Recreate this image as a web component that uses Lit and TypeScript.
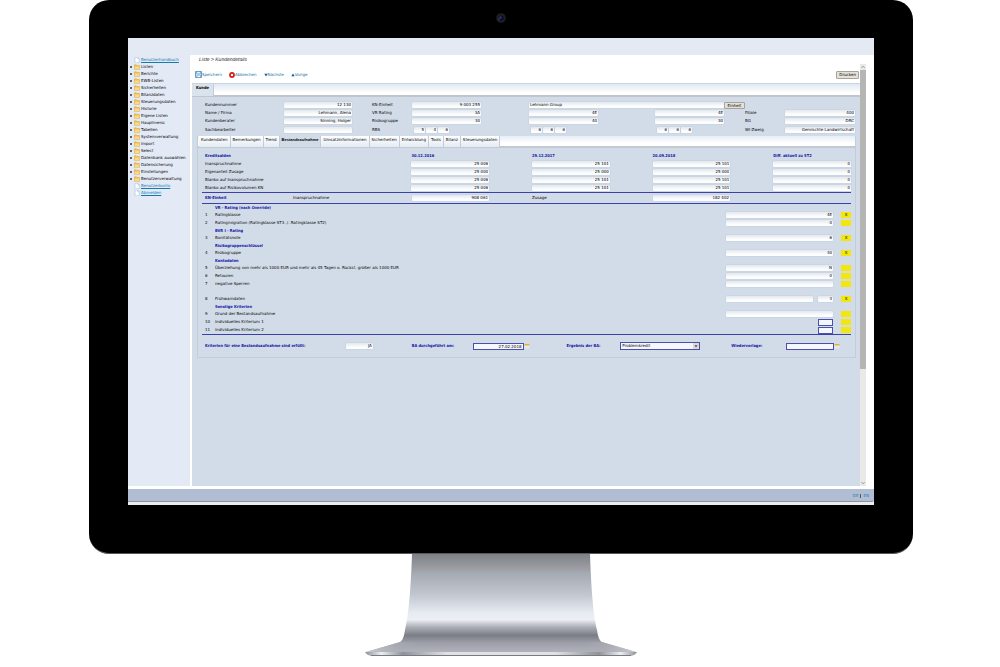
import { LitElement, html, css, svg, nothing } from "lit";
import { customElement, property, state } from "lit/decorators.js";

type Criterion =
  | { kind: "group"; label: string }
  | { kind: "space" }
  | { kind: "row"; no: number; label: string; value?: string; mark?: string; layout?: "split" | "small" };

const MENU = [
  "Listen", "Berichte", "EWB-Listen", "Sicherheiten", "Bilanzdaten", "Steuerungsdaten", "Historie",
  "Eigene Listen", "Hauptmenü", "Tabellen", "Systemverwaltung", "Import", "Select",
  "Datenbank auswählen", "Datensicherung", "Einstellungen", "Benutzerverwaltung",
];

const TABS = [
  "Kundendaten", "Bemerkungen", "Trend", "Bestandsaufnahme", "Umsatzinformationen", "Sicherheiten",
  "Entwicklung", "Tools", "Bilanz", "Steuerungsdaten",
];

const BALANCES: [string, string[]][] = [
  ["Inanspruchnahme", ["25 006", "25 101", "25 101", "0"]],
  ["Eigenanteil Zusage", ["25 000", "25 000", "25 000", "0"]],
  ["Blanko auf Inanspruchnahme", ["25 006", "25 101", "25 101", "0"]],
  ["Blanko auf Risikovolumen KN", ["25 006", "25 101", "25 101", "0"]],
];

const CRITERIA: Criterion[] = [
  { kind: "group", label: "VR - Rating (nach Override)" },
  { kind: "row", no: 1, label: "Ratingklasse", value: "4E", mark: "X" },
  { kind: "row", no: 2, label: "Ratingmigration (Ratingklasse ST3 ./. Ratingklasse ST2)", value: "0" },
  { kind: "group", label: "BVR I - Rating" },
  { kind: "row", no: 3, label: "Bonitätsnote", value: "6", mark: "X" },
  { kind: "group", label: "Risikogruppenschlüssel" },
  { kind: "row", no: 4, label: "Risikogruppe", value: "30", mark: "X" },
  { kind: "group", label: "Kontodaten" },
  { kind: "row", no: 5, label: "Überziehung von mehr als 1000 EUR und mehr als 45 Tagen o. Rückst. größer als 1000 EUR", value: "N" },
  { kind: "row", no: 6, label: "Retouren", value: "0" },
  { kind: "row", no: 7, label: "negative Sperren" },
  { kind: "space" },
  { kind: "row", no: 8, label: "Frühwarndaten", value: "3", mark: "X", layout: "split" },
  { kind: "group", label: "Sonstige Kriterien" },
  { kind: "row", no: 9, label: "Grund der Bestandsaufnahme" },
  { kind: "row", no: 10, label: "individuelles Kriterium 1", layout: "small" },
  { kind: "row", no: 11, label: "individuelles Kriterium 2", layout: "small" },
];

const shared = css`
  * { box-sizing: border-box; }
  a { color: inherit; text-decoration: none; }
  button, input, select { font: inherit; color: inherit; margin: 0; }
  svg { display: block; flex: none; }
  .field {
    display: block; width: 100%; min-width: 0; height: 6px; padding: 0 1px; border: 0; border-radius: 1px;
    background: linear-gradient(#e3e8ee, #fcfdfe 70%); box-shadow: 0 0 1px #9aa2ad;
    line-height: 6px; text-align: right; outline: 0;
  }
  .field.left { text-align: left; }
  .field.edit { height: 7px; border: 1px solid #4a4fb0; border-radius: 0; box-shadow: none; background: #f4f7fb; line-height: 5px; }
  .bold { font: 700 4px/8px "DejaVu Sans Condensed", "Noto Sans", sans-serif; color: #1216a4; }
`;

@customElement("side-menu")
class SideMenu extends LitElement {
  static styles = [shared, css`
    :host { display: block; background: #e3eaf6; }
    .list { list-style: none; margin: 0; padding: 1px 0 0 2px; }
    .item { display: flex; align-items: center; height: 7px; gap: 1px; white-space: nowrap; }
    .dot { width: 3px; height: 2px; flex: none; display: flex; }
    .dot.on::before { content: ""; width: 2px; height: 2px; border-radius: 1px; background: #333; }
    .link { color: #1479ad; text-decoration: underline; }
  `];
  private page() {
    return svg`<svg width="6" height="6" viewBox="0 0 12 12"><path d="M2 .5h5.5l3 3v8H2z" fill="#fdfeff" stroke="#9fb6cc"/><path d="M7.500 .5v3h3" fill="none" stroke="#9fb6cc"/></svg>`;
  }
  private folder() {
    return svg`<svg width="6" height="6" viewBox="0 0 12 12"><path d="M.6 10.500V2.500Q.6 1.500 1.600 1.500H4.500L5.800 3H10.400Q11.400 3 11.400 4V10.500z" fill="#f0bd4a" stroke="#d29a2d" stroke-width=".8"/><path d="M1.500 5h9.300v5H1.500z" fill="#f8d987"/></svg>`;
  }
  private doc(label: string) {
    return html`<li class="item"><span class="dot"></span>${this.page()}<a class="link" href="#">${label}</a></li>`;
  }
  render() {
    return html`<nav><ul class="list">
      ${this.doc("Benutzerhandbuch")}
      ${MENU.map((m) => html`<li class="item"><span class="dot on"></span>${this.folder()}<a href="#">${m}</a></li>`)}
      ${this.doc("Benutzerkonto")}${this.doc("Abmelden")}
    </ul></nav>`;
  }
}

@customElement("customer-head")
class CustomerHead extends LitElement {
  static styles = [shared, css`
    :host {
      display: grid; padding: 4px 5px 1px 13px; align-items: center; white-space: nowrap;
      grid-template-columns: 79fr 68fr 20fr 40fr 69fr 48fr 69fr 57fr 69fr 21fr 40fr 70fr;
      grid-template-rows: 8px 8px 8px 10px;
    }
    .c1 { grid-column: 1; } .c2 { grid-column: 2; } .c4 { grid-column: 4; } .c5 { grid-column: 5; }
    .c7 { grid-column: 7; } .c9 { grid-column: 9; } .c11 { grid-column: 11; } .c12 { grid-column: 12; }
    .wide { grid-column: 7 / 10; }
    .trio { display: grid; grid-template-columns: repeat(3, 11px); gap: 1px; padding-left: 2px; }
    .unit {
      grid-column: 10; height: 7px; padding: 0; line-height: 5px; border: 1px solid #a5a39b; border-radius: 1px;
      background: #e4e1d8; font-weight: 400; justify-self: stretch;
    }
  `];
  private box(col: string, value: string, name: string) {
    return html`<input class="field ${col}" readonly aria-label=${name} .value=${value} />`;
  }
  private trio(col: string, values: string[]) {
    return html`<div class="trio ${col}">${values.map((v) => this.box("", v, "RBS"))}</div>`;
  }
  render() {
    return html`
      <span class="c1">Kundennummer</span>${this.box("c2", "12 130", "Kundennummer")}
      <span class="c4">KN-Einheit</span>${this.box("c5", "9 003 255", "KN-Einheit")}
      ${this.box("wide left", "Lehmann Group", "Gruppe")}<button class="unit">Einheit</button>
      <span class="c1">Name / Firma</span>${this.box("c2", "Lehmann, Alena", "Name / Firma")}
      <span class="c4">VR Rating</span>${this.box("c5", "3A", "VR Rating")}
      ${this.box("c7", "4E", "VR Rating")}${this.box("c9", "4E", "VR Rating")}
      <span class="c11">Filiale</span>${this.box("c12", "400", "Filiale")}
      <span class="c1">Kundenberater</span>${this.box("c2", "Sinning, Holger", "Kundenberater")}
      <span class="c4">Risikogruppe</span>${this.box("c5", "30", "Risikogruppe")}
      ${this.box("c7", "40", "Risikogruppe")}${this.box("c9", "30", "Risikogruppe")}
      <span class="c11">BG</span>${this.box("c12", "DRC", "BG")}
      <span class="c1">Sachbearbeiter</span>${this.box("c2", "", "Sachbearbeiter")}
      <span class="c4">RBS</span>${this.trio("c5", ["5", "4", "6"])}
      ${this.trio("c7", ["6", "6", "6"])}${this.trio("c9", ["6", "6", "6"])}
      <span class="c11">WI-Zweig</span>${this.box("c12", "Gemischte Landwirtschaft", "WI-Zweig")}
    `;
  }
}

@customElement("review-panel")
class ReviewPanel extends LitElement {
  @state() active = "Bestandsaufnahme";
  static styles = [shared, css`
    :host { display: block; margin: 0 4px 0 5px; border: 1px solid #c3cdd9; border-top: 0; white-space: nowrap; }
    .tabs { display: flex; height: 12px; padding-left: 1px; background: linear-gradient(#e6eef6, #ffffff 70%); border-bottom: 2px solid #c3c9d1; }
    .tab {
      padding: 0 2px; height: 11px; border: 0; border-right: 1px solid #c3cdd9; line-height: 8px; display: flex;
      background: linear-gradient(#ffffff, #e3ebf4);
    }
    .tab.on { font: 700 4px/8px "Liberation Sans", Arial, sans-serif; background: #d2dce8; }
    .body { padding: 4px 4px 0; }
    .grid { width: 100%; border-collapse: collapse; table-layout: fixed; }
    .grid th, .grid td { padding: 0; height: 8px; text-align: left; vertical-align: middle; }
    .grid .name { font-weight: 400; }
    .grid .first { padding-left: 3px; }
    .k0 { width: 32.300%; } .k1 { width: 12%; } .gap { width: 6.600%; }
    .unit {
      display: grid; grid-template-columns: 91fr 119fr 77fr 43fr 78fr 43fr 77fr 121fr; height: 12px; align-items: center;
      border: solid #3b40ac; border-width: 1px 0; padding-left: 0;
    }
    .unit .c7 { grid-column: 7; }
    .unit .bold { padding-left: 3px; }
    .list { border-bottom: 1px solid #3b40ac; }
    .crit { display: grid; grid-template-columns: 13px 1fr 16.500% 8px 10px; height: 8px; align-items: center; }
    .crit.head, .crit.space { height: 7px; }
    .crit .no { padding-left: 3px; }
    .bold.group { grid-column: 2; line-height: 7px; }
    .cell { display: grid; grid-template-columns: 1fr 15px; gap: 5px; }
    .cell .all { grid-column: 1 / 3; }
    .cell .end { grid-column: 2; }
    .mark { grid-column: 5; height: 6px; line-height: 6px; text-align: center; background: #f3e60c; }
    .foot {
      display: grid; height: 22px; align-items: center; padding-left: 3px;
      grid-template-columns: 141fr 27fr 39fr 61fr 51fr 43fr 54fr 80fr 31fr 55fr 48fr 17fr;
    }
    .f4 { grid-column: 4; } .f7 { grid-column: 7; } .f10 { grid-column: 10; }
    .pick { position: relative; }
    .drop {
      appearance: none; display: block; width: 100%; height: 8px; padding: 0 1px; border: 1px solid #4a4fb0; border-radius: 0;
      background: #f4f7fb; line-height: 6px;
    }
    .arrow { position: absolute; right: 1px; top: 1px; pointer-events: none; }
  `];
  private field(value = "", cls = "", name = "Wert") {
    return html`<input class="field ${cls}" aria-label=${name} .value=${value} />`;
  }
  private calendar() {
    return svg`<svg width="6" height="6" viewBox="0 0 12 12"><path d="M1 3h10v8H1z" fill="#e3e7ee"/><path d="M1 2h10v3H1z" fill="#efb020"/></svg>`;
  }
  private criterion(c: Criterion) {
    if (c.kind === "space") return html`<div class="crit space"></div>`;
    if (c.kind === "group") return html`<div class="crit head"><span class="bold group">${c.label}</span></div>`;
    const cell =
      c.layout === "split" ? html`${this.field("", "", c.label)}${this.field(c.value, "", c.label)}`
      : c.layout === "small" ? this.field("", "edit end", c.label)
      : this.field(c.value, "all", c.label);
    return html`<div class="crit"><span class="no">${c.no}</span><span>${c.label}</span><div class="cell">${cell}</div><span class="mark">${c.mark ?? nothing}</span></div>`;
  }
  render() {
    return html`
      <div class="tabs" role="tablist">
        ${TABS.map((t) => html`<button role="tab" class="tab ${t === this.active ? "on" : ""}" @click=${() => (this.active = t)}>${t}</button>`)}
      </div>
      <div class="body">
        <table class="grid">
          <colgroup><col class="k0" /><col class="k1" /><col class="gap" /><col class="k1" /><col class="gap" /><col class="k1" /><col class="gap" /><col class="k1" /></colgroup>
          <tr><th class="first bold">Kreditsalden</th><th class="bold">30.12.2016</th><th></th><th class="bold">29.12.2017</th><th></th><th class="bold">20.09.2018</th><th></th><th class="bold">Diff. aktuell zu ST2</th></tr>
          ${BALANCES.map(([label, v]) => html`<tr><th class="first name">${label}</th>
            ${v.map((x, i) => html`${i ? html`<td></td>` : nothing}<td>${this.field(x, "", label)}</td>`)}</tr>`)}
        </table>
        <div class="unit"><span class="bold">KN-Einheit</span><span>Inanspruchnahme</span>${this.field("908 061", "", "Inanspruchnahme")}<span></span><span>Zusage</span>${this.field("182 402", "c7", "Zusage")}</div>
        <div class="list">${CRITERIA.map((c) => this.criterion(c))}</div>
        <div class="foot">
          <label class="bold" for="met">Kriterien für eine Bestandsaufnahme sind erfüllt:</label><input id="met" class="field" .value=${"JA"} />
          <label class="bold f4" for="date">BA durchgeführt am:</label><input id="date" class="field edit" .value=${"27.02.2018"} />${this.calendar()}
          <label class="bold f7" for="result">Ergebnis der BA:</label>
          <div class="pick"><select id="result" class="drop"><option>Problemkredit</option></select>
            <svg class="arrow" width="6" height="6" viewBox="0 0 12 12"><path d="M0 0h12v12H0z" fill="#dcd9d0"/><path d="M3 5h6L6 8z" fill="#111"/></svg></div>
          <label class="bold f10" for="again">Wiedervorlage:</label><input id="again" class="field edit" />${this.calendar()}
        </div>
      </div>`;
  }
}

@customElement("app-root")
class AppRoot extends LitElement {
  static styles = [shared, css`
    :host { display: block; min-height: 100vh; background: #fff; font: 4px/8px "DejaVu Sans", "Liberation Sans", sans-serif; color: #000; text-rendering: geometricPrecision; }
    .monitor { margin: 0 87px 0 89px; padding: 0 39px 48px; background: #000; border-radius: 20px; border-bottom: 1px solid #55585c; }
    .camera { height: 38px; display: flex; justify-content: center; align-items: center; }
    .screen { background: #fff; }
    .band { height: 17px; background: #e3eaf4; }
    .work { display: grid; grid-template-columns: 62px 1fr 7px 7px; min-height: 431px; }
    .page { padding-left: 2px; display: flex; flex-direction: column; }
    .crumb { padding: 0 7px; font: italic 5px/11px "Liberation Sans", Arial, sans-serif; color: #1b2028; }
    .tools { display: flex; align-items: center; height: 17px; padding: 0 1px 0 3px; gap: 7px; }
    .tool { display: flex; align-items: center; color: #14709f; }
    .print { margin-left: auto; height: 8px; padding: 0 2px; line-height: 6px; border: 1px solid #a5a39b; border-radius: 1px; background: #e4e1d8; }
    .bar { height: 14px; border-bottom: 2px solid #c1c6cd; border-top: 1px solid #ccd5df; background: linear-gradient(#dfe9f3, #ffffff 80%); }
    .tab { width: 22px; height: 12px; padding: 0; border: 0; border-right: 1px solid #c3cdd9; background: #dae3ed; font: 700 4px/8px "DejaVu Sans Condensed", "Noto Sans", sans-serif; display: flex; justify-content: center; }
    .sheet { flex: 1; background: #d2dce8; padding-bottom: 16px; }
    .scroll { margin: 9px 0 0; width: 6px; background: #e9e9e7; display: flex; flex-direction: column; align-items: center; color: #555; }
    .thumb { height: 299px; width: 6px; background: #b5b5b3; }
    .end { margin-top: auto; }
    .status { margin-top: 3px; height: 13px; display: flex; justify-content: flex-end; align-items: center; gap: 2px; padding: 1px 5px 0; background: #b0bdd2; border-bottom: 1px solid #8f959e; color: #1b7fae; border-radius: 0 0 2px 0; }
    .sep { width: 1px; height: 4px; background: #555; }
    .rim { height: 3px; background: #eceeed; }
    .base { margin: 0 87px 0 89px; display: flex; justify-content: center; }
  `];
  render() {
    return html`
      <div class="monitor">
        <div class="camera"><svg width="12" height="12" viewBox="0 0 12 12"><circle cx="6" cy="5" r="4.800" fill="#1d1f24"/><circle cx="6" cy="5" r="2.500" fill="#0b0c18"/><circle cx="5.500" cy="4.500" r="1.200" fill="#30309a"/><circle cx="4" cy="6" r=".6" fill="#8a8d95"/></svg></div>
        <div class="screen">
          <div class="band"></div>
          <div class="work">
            <side-menu></side-menu>
            <main class="page">
              <div class="crumb">Liste &gt; Kundendetails</div>
              <div class="tools">
                <a class="tool" href="#"><svg width="7" height="7" viewBox="0 0 14 14"><path d="M1 1h12v12H1z" fill="#d7e8f5" stroke="#3a7db3" stroke-width="1.500"/><path d="M3 1.500h8v4H3z" fill="#fff" stroke="#3a7db3"/><path d="M4 8.500h7V13H4z" fill="#fff" stroke="#3a7db3"/></svg>Speichern</a>
                <a class="tool" href="#"><svg width="6" height="6" viewBox="0 0 12 12"><circle cx="6" cy="6" r="5.800" fill="#d3261c"/><path d="M4 4l4 4M8 4l-4 4" stroke="#fff" stroke-width="2"/></svg>Abbrechen</a>
                <a class="tool" href="#"><svg width="4" height="4" viewBox="0 0 8 8"><path d="M.5 1.500h7L4 7z" fill="#14609a"/></svg>Nächste</a>
                <a class="tool" href="#"><svg width="4" height="4" viewBox="0 0 8 8"><path d="M.5 6.500h7L4 1z" fill="#14609a"/></svg>Vorige</a>
                <button class="print">Drucken</button>
              </div>
              <div class="bar"><button class="tab">Kunde</button></div>
              <div class="sheet"><customer-head></customer-head><review-panel></review-panel></div>
            </main>
            <div class="scroll">
              <svg width="6" height="6" viewBox="0 0 12 12"><path d="M3 7.500l3-3 3 3" fill="none" stroke="#777" stroke-width="1.500"/></svg>
              <div class="thumb"></div>
              <svg class="end" width="6" height="6" viewBox="0 0 12 12"><path d="M3 4.500l3 3 3-3" fill="none" stroke="#777" stroke-width="1.500"/></svg>
            </div>
          </div>
          <div class="status"><a href="#">DE</a><span class="sep"></span><a href="#">EN</a></div>
          <div class="rim"></div>
        </div>
      </div>
      <div class="base"><svg width="272" height="104" viewBox="0 0 272 104">
        <defs>
          <linearGradient id="neck" x1="0" y1="0" x2="0" y2="1">
            <stop offset="0" stop-color="#7d8188"/><stop offset=".14" stop-color="#9a9ca1"/><stop offset=".2" stop-color="#a6aab2"/>
            <stop offset=".42" stop-color="#c3c7cf"/><stop offset=".6" stop-color="#e6eaf1"/><stop offset=".67" stop-color="#eceff6"/>
            <stop offset=".74" stop-color="#b0b3b9"/><stop offset=".83" stop-color="#7a7d84"/><stop offset=".9" stop-color="#9a9da5"/><stop offset="1" stop-color="#b0b3bb"/>
          </linearGradient>
          <linearGradient id="foot" x1="0" y1="0" x2="1" y2="0">
            <stop offset="0" stop-color="#c6c8cc"/><stop offset=".12" stop-color="#a9acb3" stop-opacity=".6"/><stop offset=".2" stop-color="#a9acb3" stop-opacity="0"/>
            <stop offset=".8" stop-color="#a9acb3" stop-opacity="0"/><stop offset=".88" stop-color="#a9acb3" stop-opacity=".6"/><stop offset="1" stop-color="#c6c8cc"/>
          </linearGradient>
          <linearGradient id="lip" x1="0" y1="0" x2="1" y2="0">
            <stop offset="0" stop-color="#8e9197"/><stop offset=".06" stop-color="#eceef1"/><stop offset=".14" stop-color="#8f9298"/><stop offset=".3" stop-color="#dfe1e5"/>
            <stop offset=".7" stop-color="#dfe1e5"/><stop offset=".86" stop-color="#8f9298"/><stop offset=".94" stop-color="#eceef1"/><stop offset="1" stop-color="#8e9197"/>
          </linearGradient>
        </defs>
        <path d="M47 0H225C226 30 228 60 232 76C233 82 234 86 237 88L271 98H1L35 88C38 86 39 82 40 76C44 60 46 30 47 0z" fill="url(#neck)"/>
        <path d="M35 88H237L271 98H1z" fill="url(#foot)"/>
        <path d="M0 98H272Q270 102 264 102H8Q2 102 0 98z" fill="url(#lip)"/>
        <path d="M6 101.500H266" stroke="#777a80"/>
      </svg></div>
    `;
  }
}
